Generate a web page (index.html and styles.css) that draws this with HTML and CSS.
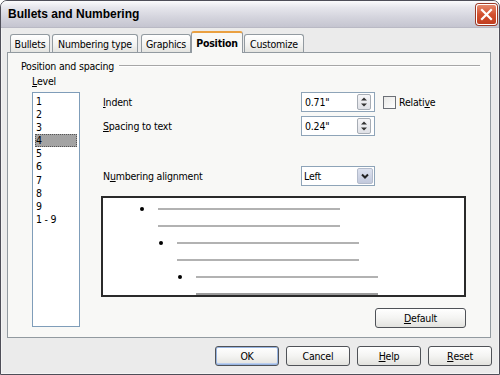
FILE: index.html
```html
<!DOCTYPE html>
<html>
<head>
<meta charset="utf-8">
<link rel="stylesheet" href="styles.css">
</head>
<body>
<div class="window">
  <div class="titlebar">
    <span class="title">Bullets and Numbering</span>
    <span class="close">
      <svg width="21" height="21" viewBox="0 0 21 21"><path d="M6 6 L15 15 M15 6 L6 15" stroke="#fff" stroke-width="2.2" stroke-linecap="square"/></svg>
    </span>
  </div>
  <div class="tabs">
    <div class="tab t-bullets">Bullets</div>
    <div class="tab t-numbering">Numbering type</div>
    <div class="tab t-graphics">Graphics</div>
    <div class="tab t-position active">Position</div>
    <div class="tab t-customize">Customize</div>
  </div>
  <div class="panel">
    <div class="legend"><span>Position and spacing</span><span class="rule"></span></div>
    <div class="body">
      <div class="levelcol">
        <div class="lbl"><u>L</u>evel</div>
        <ul class="list">
          <li>1</li><li>2</li><li>3</li><li class="sel">4</li><li>5</li><li>6</li><li>7</li><li>8</li><li>9</li><li>1 - 9</li>
        </ul>
      </div>
      <div class="form">
        <div class="row">
          <span class="flabel"><u>I</u>ndent</span>
          <div class="field"><span>0.71"</span>
            <span class="spin"><svg width="12" height="14" viewBox="0 0 12 14"><path d="M3 5.5 L6 2.5 L9 5.5 Z M3 8.5 L6 11.5 L9 8.5 Z" fill="#333"/></svg></span>
          </div>
          <span class="check"><span class="box"></span>Relati<u>v</u>e</span>
        </div>
        <div class="row row2">
          <span class="flabel"><u>S</u>pacing to text</span>
          <div class="field"><span>0.24"</span>
            <span class="spin"><svg width="12" height="14" viewBox="0 0 12 14"><path d="M3 5.5 L6 2.5 L9 5.5 Z M3 8.5 L6 11.5 L9 8.5 Z" fill="#333"/></svg></span>
          </div>
        </div>
        <div class="row row3">
          <span class="flabel">N<u>u</u>mbering alignment</span>
          <div class="field select"><span>Left</span>
            <span class="drop"><svg width="14" height="14" viewBox="0 0 14 14"><path d="M4 5.5 L7 8.5 L10 5.5" fill="none" stroke="#222" stroke-width="2"/></svg></span>
          </div>
        </div>
        <div class="preview">
          <div class="prow l1"><span class="dot"></span><span class="pline"></span></div>
          <div class="prow l1 cont"><span class="pline"></span></div>
          <div class="prow l2"><span class="dot"></span><span class="pline"></span></div>
          <div class="prow l2 cont"><span class="pline"></span></div>
          <div class="prow l3"><span class="dot"></span><span class="pline"></span></div>
          <div class="prow l3 cont"><span class="pline thick"></span></div>
        </div>
        <div class="actions"><span class="btn btn-default"><u>D</u>efault</span></div>
      </div>
    </div>
  </div>
  <div class="footer">
    <span class="btn ok">OK</span>
    <span class="btn">Cancel</span>
    <span class="btn"><u>H</u>elp</span>
    <span class="btn"><u>R</u>eset</span>
  </div>
</div>
</body>
</html>
```

FILE: styles.css
```css
* { box-sizing: border-box; }
html, body { margin: 0; padding: 0; }
body {
  width: 500px;
  height: 375px;
  overflow: hidden;
  font-family: "DejaVu Sans Condensed", "Liberation Sans", Arial, sans-serif;
  font-size: 10.5px;
  letter-spacing: -0.2px;
  color: #000;
  background: #fff;
}
u { text-decoration: underline; text-underline-offset: 1px; }

.window {
  width: 500px;
  height: 375px;
  border: 1px solid #4e4e58;
  border-radius: 7px 7px 0 0;
  background: #ebebeb;
  box-shadow: inset 0 0 0 1px #f4f4f4;
  overflow: hidden;
}

.titlebar {
  height: 27px;
  display: flex;
  align-items: center;
  justify-content: space-between;
  padding: 0 2px 0 7px;
  background: linear-gradient(#fbfbfc 0%, #e6e6ec 25%, #d3d3dc 65%, #c5c5d0 100%);
  border-bottom: 1px solid #b9b9c4;
}
.title {
  font-family: "Liberation Sans", Arial, sans-serif;
  font-weight: bold;
  font-size: 12px;
  letter-spacing: 0;
}
.close {
  width: 21px;
  height: 21px;
  border-radius: 3px;
  border: 1px solid #fff;
  background: linear-gradient(#e58a6e, #d2502f 50%, #c13d1f);
  box-shadow: 0 0 0 1px #9b3a27;
  display: flex;
}
.close svg { margin: -1px; }

.tabs {
  height: 24px;
  display: flex;
  align-items: flex-end;
  padding-left: 9px;
  position: relative;
  z-index: 2;
}
.tab {
  height: 18px;
  border: 1px solid #929aa0;
  border-bottom: none;
  border-radius: 3px 3px 0 0;
  background: linear-gradient(#ffffff, #f2f2f0 60%, #e4e4e0);
  display: flex;
  align-items: center;
  justify-content: center;
}
.t-bullets { width: 40px; }
.t-numbering { width: 86px; margin-left: 2px; }
.t-graphics { width: 50px; margin-left: 3px; }
.t-position { width: 52px; }
.t-customize { width: 60px; margin-left: 1px; }
.tab.active {
  height: 22px;
  margin-bottom: -1px;
  font-weight: bold;
  background: #f8f8f6;
  border-top: 2px solid #eaa040;
}

.panel {
  width: 484px;
  height: 286px;
  margin-left: 6px;
  border: 1px solid #929aa0;
  background: #f8f8f6;
}

.legend {
  display: flex;
  align-items: center;
  padding: 6px 10px 0 13px;
  line-height: 14px;
}
.legend .rule {
  flex: 1;
  height: 2px;
  margin-left: 5px;
  border-top: 1px solid #a6a6a6;
  border-bottom: 1px solid #fff;
}

.body {
  display: flex;
  align-items: flex-start;
  padding-left: 24px;
}
.levelcol { width: 48px; }
.lbl { line-height: 14px; margin-top: 1px; }
.list {
  list-style: none;
  margin: 4px 0 0 0;
  padding: 1.5px 1px 0 1px;
  width: 48px;
  height: 235px;
  border: 1px solid #7f9db9;
  background: #fff;
}
.list li {
  line-height: 13.2px;
  height: 13.2px;
  padding-left: 1px;
  margin: 0 1px;
}
.list li.sel {
  background: #a3a3a3;
  outline: 1px dotted #555;
  outline-offset: -1px;
}

.form {
  width: 365px;
  margin-left: 21px;
  margin-top: 19px;
  display: flex;
  flex-direction: column;
}
.row {
  height: 20px;
  display: flex;
  align-items: center;
}
.row2 { margin-top: 4px; }
.row3 { margin-top: 30px; }
.flabel { width: 200px; padding-left: 2px; }
.field {
  width: 74px;
  height: 20px;
  border: 1px solid #8ea4b8;
  background: #fff;
  display: flex;
  align-items: center;
  justify-content: space-between;
  padding: 0 3px 0 3px;
}
.spin {
  width: 14px;
  height: 16px;
  border: 1px solid #a7adb5;
  border-radius: 2px;
  background: linear-gradient(#f6f6f8, #dfe1e6);
  display: flex;
  align-items: center;
  justify-content: center;
}
.select { padding-right: 1px; padding-left: 2px; }
.drop {
  width: 16px;
  height: 16px;
  border: 1px solid #b4bccc;
  border-radius: 2px;
  background: linear-gradient(#dde2ef, #c2c9dc);
  display: flex;
  align-items: center;
  justify-content: center;
}
.check {
  display: flex;
  align-items: center;
  margin-left: 8px;
}
.check .box {
  width: 13px;
  height: 13px;
  border: 1px solid #6c7077;
  background: linear-gradient(135deg, #e8e8e6, #fff);
  margin-right: 3px;
}

.preview {
  margin-top: 10px;
  width: 365px;
  height: 101px;
  border: 2px solid #2a2a2a;
  background: #fff;
  padding-top: 2px;
  overflow: hidden;
}
.prow {
  height: 17px;
  display: flex;
  align-items: center;
}
.prow.l1 { padding-left: 37px; }
.prow.l2 { padding-left: 56px; }
.prow.l3 { padding-left: 75px; }
.prow.cont.l1 { padding-left: 55px; }
.prow.cont.l2 { padding-left: 74px; }
.prow.cont.l3 { padding-left: 93px; }
.dot {
  width: 4px;
  height: 4px;
  border-radius: 50%;
  background: #000;
  margin-right: 14px;
}
.pline {
  width: 182px;
  height: 2px;
  background: #b2b2b2;
}
.pline.thick { height: 3px; background: #9c9c9c; margin-top: 2px; }

.actions {
  display: flex;
  justify-content: flex-end;
  margin-top: 11px;
}
.btn {
  width: 64px;
  height: 20px;
  border: 1px solid #4f5257;
  border-radius: 3px;
  background: linear-gradient(#ffffff, #f4f4f2 50%, #e2e2de);
  display: flex;
  align-items: center;
  justify-content: center;
}
.btn-default { width: 91px; }
.btn.ok { box-shadow: inset 0 0 0 1px #98b4e0, inset 0 -1px 0 1px #b9cdee; }

.footer {
  display: flex;
  justify-content: flex-end;
  gap: 7px;
  margin-top: 8px;
  padding-right: 7px;
}
```
